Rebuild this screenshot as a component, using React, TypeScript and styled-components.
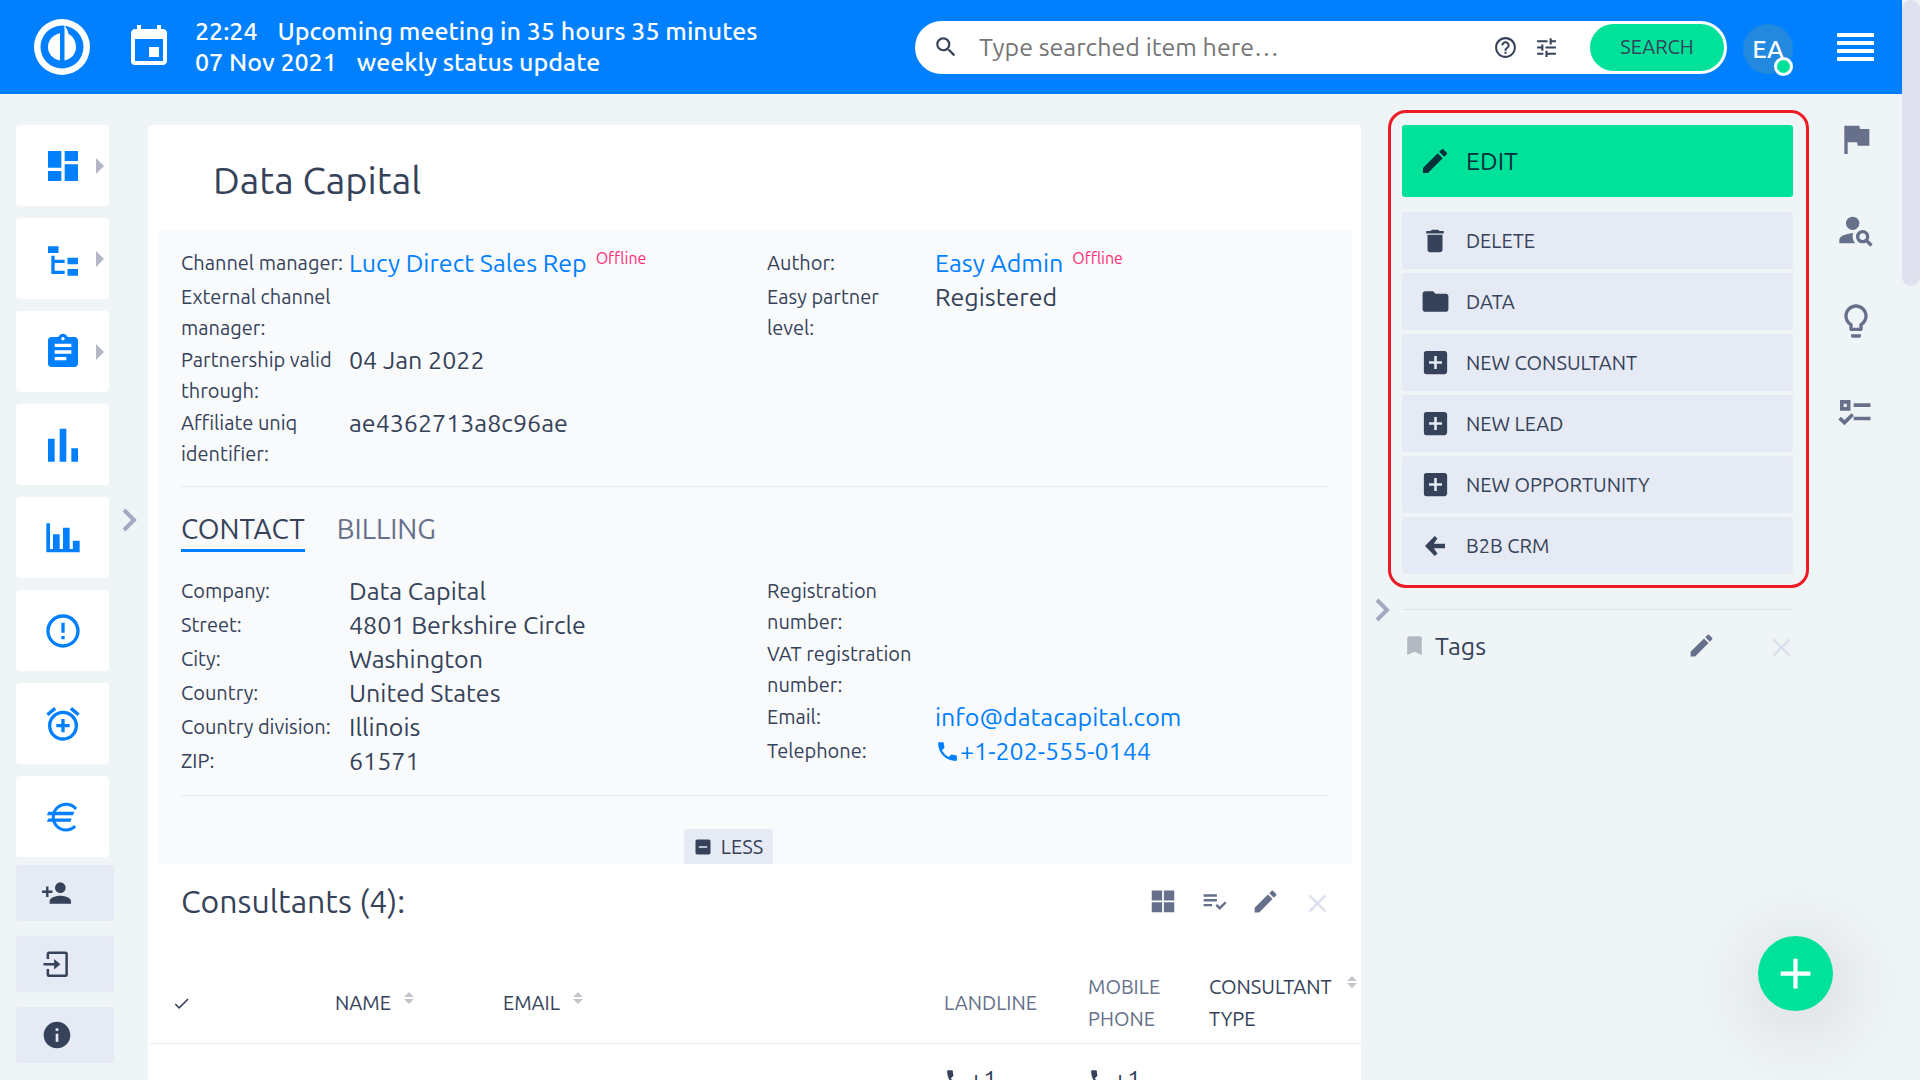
import React from "react";
import styled, { createGlobalStyle, css } from "styled-components";
import {
  MdAdd,
  MdAddAlarm,
  MdAddBox,
  MdAssignment,
  MdBookmark,
  MdCheck,
  MdClose,
  MdDashboard,
  MdDelete,
  MdEdit,
  MdErrorOutline,
  MdEvent,
  MdFlag,
  MdFolder,
  MdHelpOutline,
  MdIndeterminateCheckBox,
  MdInfo,
  MdLightbulbOutline,
  MdPersonSearch,
  MdPhone,
  MdPlaylistAddCheck,
  MdSearch,
  MdTune,
} from "react-icons/md";

const color = {
  text: "#354259",
  muted: "#66708a",
  faint: "#a4a8c0",
  link: "#0080ff",
  page: "#eff4f7",
  panel: "#f9fafc",
  soft: "#e6eaf4",
  line: "#e6e9f2",
  green: "#00e29a",
  pink: "#ff2d78",
};

const GlobalStyle = createGlobalStyle`
  *, *::before, *::after { box-sizing: border-box; }
  body {
    margin: 0;
    overflow: hidden;
    background: ${color.page};
    color: ${color.text};
    font-family: Ubuntu, "Noto Sans", "Open Sans", sans-serif;
    font-size: 25px;
    line-height: 34px;
  }
  button, input { font: inherit; color: inherit; }
  button { border: 0; padding: 0; background: none; cursor: pointer; }
  a { color: ${color.link}; text-decoration: none; }
  svg { display: block; flex: none; }
`;

const Shell = styled.div`
  display: grid;
  grid-template-columns: minmax(0, 1fr) 18px;
  height: 100vh;
`;

const Page = styled.div`
  display: flex;
  flex-direction: column;
  min-width: 0;
  height: 100vh;
  overflow: hidden;
`;

const ScrollTrack = styled.div`
  background: ${color.page};
`;

const ScrollThumb = styled.div`
  height: 286px;
  border-radius: 9px;
  background: #dfe1ef;
`;

const Header = styled.header`
  display: flex;
  align-items: center;
  flex: none;
  height: 94px;
  padding: 0 28px 0 34px;
  background: ${color.link};
  color: #fff;
`;

const EventLink = styled.a`
  display: flex;
  align-items: center;
  gap: 22px;
  margin-left: 35px;
  color: #fff;
  font-weight: 500;
  line-height: 31px;
`;

const EventLine = styled.span`
  display: flex;
  gap: 20px;
`;

const SearchBox = styled.form`
  display: flex;
  align-items: center;
  width: 812px;
  margin-left: auto;
  padding: 3px 3px 3px 18px;
  border-radius: 27px;
  background: #fff;
  color: ${color.text};
`;

const SearchInput = styled.input`
  flex: 1;
  min-width: 0;
  margin-left: 20px;
  padding: 0;
  border: 0;
  outline: 0;
  background: none;
  &::placeholder {
    color: #757575;
    opacity: 1;
  }
`;

const SearchTools = styled.div`
  display: flex;
  gap: 16px;
  margin-right: 31px;
`;

const SearchButton = styled.button`
  width: 134px;
  height: 47px;
  border-radius: 24px;
  background: ${color.green};
  font-size: 20px;
`;

const Avatar = styled.button`
  position: relative;
  width: 50px;
  height: 50px;
  margin: 4px 44px 0 16px;
  border-radius: 50%;
  background: #2389df;
  color: #fff;
  font-weight: 500;
`;

const Presence = styled.span`
  position: absolute;
  right: 0;
  bottom: -2px;
  width: 19px;
  height: 19px;
  border: 3px solid #fff;
  border-radius: 50%;
  background: ${color.green};
`;

const Body = styled.div`
  display: grid;
  grid-template-columns: 148px minmax(0, 1fr) 450px 91px;
  flex: 1;
  min-height: 0;
  padding-top: 31px;
`;

const LeftNav = styled.nav`
  position: relative;
  padding-left: 16px;
`;

const Tiles = styled.div`
  display: flex;
  flex-direction: column;
  align-items: flex-start;
  gap: 12px;
`;

const Tile = styled.a`
  position: relative;
  display: grid;
  place-items: center;
  width: 93px;
  height: 81px;
  border-radius: 4px;
  background: #fff;
`;

const TileArrow = styled.span`
  position: absolute;
  right: 5px;
  border: solid transparent;
  border-width: 8px 0 8px 8px;
  border-left-color: #b3b6c6;
`;

const NavFooter = styled.div`
  display: flex;
  flex-direction: column;
  gap: 15px;
  margin-top: 8px;
`;

const FooterButton = styled.button`
  display: flex;
  align-items: center;
  width: 98px;
  height: 56px;
  padding-left: 25px;
  border-radius: 3px;
  background: ${color.soft};
`;

const Collapse = styled.button<{ $top: number; $side: "left" | "right" }>`
  position: absolute;
  top: ${(p) => p.$top}px;
  ${(p) => (p.$side === "left" ? css`left: 14px;` : css`right: 10px;`)}
  color: ${color.faint};
`;

const Card = styled.main`
  border-radius: 4px 4px 0 0;
  background: #fff;
`;

const Title = styled.h1`
  margin: 0;
  padding: 28px 65px 24px;
  font-weight: 400;
  font-size: 38px;
  line-height: 54px;
`;

const Panel = styled.section`
  margin: 0 9px 0 10px;
  padding: 15px 23px 0;
  background: ${color.panel};
`;

const Columns = styled.div`
  display: grid;
  grid-template-columns: 1fr 1fr;
  margin-right: -24px;
`;

const Fields = styled.dl`
  margin: 0;
`;

const Field = styled.div`
  display: grid;
  grid-template-columns: 168px 1fr;
`;

const Label = styled.dt`
  padding-top: 1px;
  font-size: 20px;
  line-height: 31px;
  white-space: pre-line;
`;

const Value = styled.dd`
  display: flex;
  align-items: center;
  margin: 0;
  height: 34px;
  white-space: nowrap;
`;

const PhoneLink = styled.a`
  display: flex;
  align-items: center;
`;

const Status = styled.span`
  margin: 0 0 11px 9px;
  color: ${color.pink};
  font-size: 16px;
  line-height: 20px;
`;

const Rule = styled.hr`
  height: 1px;
  margin: 17px 0 0;
  border: 0;
  background: ${color.line};
`;

const Tabs = styled.div`
  display: flex;
  gap: 32px;
  margin: 25px 0 22px;
`;

const Tab = styled.button<{ $active?: boolean }>`
  padding-bottom: 3px;
  border-bottom: 3px solid ${(p) => (p.$active ? color.link : "transparent")};
  color: ${(p) => (p.$active ? color.text : color.muted)};
  font-size: 28px;
  line-height: 34px;
`;

const LessRow = styled.div`
  display: flex;
  justify-content: center;
  padding: 33px 53px 0 0;
`;

const LessButton = styled.button`
  display: flex;
  align-items: center;
  gap: 8px;
  height: 35px;
  padding: 0 10px 0 9px;
  border-radius: 3px 3px 0 0;
  background: ${color.soft};
  font-size: 20px;
`;

const SectionHead = styled.div`
  display: flex;
  align-items: center;
  justify-content: space-between;
  padding: 17px 28px 42px 33px;
`;

const SectionTitle = styled.h2`
  margin: 0;
  font-weight: 400;
  font-size: 32px;
  line-height: 40px;
`;

const Tools = styled.div`
  display: flex;
  align-items: center;
  gap: 22px;
  color: ${color.muted};
`;

const CloseButton = styled.button`
  padding-top: 4px;
  color: #dce0ee;
`;

const Table = styled.table`
  width: 100%;
  padding-left: 2px;
  border-spacing: 0;
  table-layout: fixed;
`;

const Th = styled.th<{ $muted?: boolean; $width?: number }>`
  width: ${(p) => (p.$width ? `${p.$width}px` : "auto")};
  padding: 8px 4px 8px 8px;
  border-bottom: 1px solid ${color.line};
  color: ${(p) => (p.$muted ? color.muted : color.text)};
  font-weight: 400;
  font-size: 20px;
  line-height: 32px;
  text-align: left;
`;

const SortButton = styled.button`
  display: flex;
  align-items: flex-start;
  gap: 13px;
  text-align: left;
`;

const SortIcon = styled.svg`
  margin-top: 5px;
`;

const CheckHead = styled.button`
  display: block;
  margin-left: 14px;
`;

const Td = styled.td`
  padding: 18px 0 0 8px;
`;

const PhoneCell = styled.span`
  display: flex;
  align-items: center;
`;

const Sidebar = styled.aside`
  position: relative;
  padding: 0 2px 0 27px;
`;

const ActionFrame = styled.div`
  display: flex;
  flex-direction: column;
  gap: 4px;
  margin-top: -15px;
  padding: 12px 13px 11px 11px;
  border: 3px solid #ed1c24;
  border-radius: 18px;
`;

const Action = styled.button<{ $primary?: boolean }>`
  display: flex;
  align-items: center;
  gap: 15px;
  height: 57px;
  padding-left: 17px;
  border-radius: 3px;
  background: ${color.soft};
  font-size: 20px;
  ${(p) =>
    p.$primary &&
    css`
      height: 72px;
      margin-bottom: 11px;
      background: ${color.green};
      color: #06303a;
      font-size: 25px;
    `}
`;

const ActionIcon = styled.span`
  display: grid;
  place-items: center;
  width: 32px;
`;

const Tags = styled.section`
  display: flex;
  align-items: center;
  margin: 21px 16px 0 14px;
  padding: 18px 0 0;
  border-top: 1px solid #dfe2ef;
`;

const TagsTitle = styled.h2`
  flex: 1;
  margin: 0 0 0 8px;
  font-weight: 400;
  font-size: 25px;
  line-height: 34px;
`;

const TagTools = styled.div`
  display: flex;
  align-items: center;
  gap: 50px;
  margin-right: -4px;
  color: ${color.muted};
`;

const BookmarkMark = styled.span`
  color: #b3b8c2;
`;

const Rail = styled.nav`
  display: flex;
  flex-direction: column;
  align-items: center;
  gap: 51px;
  margin-top: -6px;
  padding-right: 2px;
  color: ${color.muted};
`;

const Fab = styled.button`
  position: fixed;
  right: 87px;
  bottom: 69px;
  display: grid;
  place-items: center;
  width: 75px;
  height: 75px;
  border-radius: 50%;
  background: ${color.green};
  color: #fff;
  box-shadow: 4px 12px 70px 16px rgba(60, 40, 40, 0.1);
`;

const Logo = () => (
  <svg width="56" height="56" viewBox="0 0 56 56" fill="#fff" aria-label="Home" role="img">
    <path
      fillRule="evenodd"
      d="M28 0a28 28 0 1 1 0 56a28 28 0 1 1 0-56zM28 6.5a21.5 21.5 0 1 0 0 43a21.5 21.5 0 1 0 0-43z"
    />
    <path d="M26 14.2v27.4C18.5 40 14 34.6 14 28S18.5 16 26 14.2z" />
    <path d="M30.5 5c1 3.8 3.5 6 4 10C39.5 17.5 42 22.5 42 28c0 6.6-4.5 12-11.5 13.6z" />
  </svg>
);

const MenuIcon = () => (
  <svg width="37" height="28" viewBox="0 0 37 28" fill="#fff">
    <path d="M0 0h37v4H0zM0 8h37v4H0zM0 16h37v4H0zM0 24h37v4H0z" />
  </svg>
);

const TreeIcon = () => (
  <svg width="40" height="40" viewBox="0 0 24 24" fill="currentColor">
    <path d="M3 4.4h6.300v4H3zM5 10h2v2.400h6v2H7V19h6v2H5zM14.700 11.200H21v4h-6.300zM14.700 18H21v4h-6.300z" />
  </svg>
);

const BarsIcon = () => (
  <svg width="40" height="40" viewBox="0 0 24 24" fill="currentColor">
    <path d="M3 8.200h4V22H3zM10 2.200h4V22h-4zM17 14h4v8h-4z" />
  </svg>
);

const ReportIcon = () => (
  <svg width="40" height="40" viewBox="0 0 24 24" fill="currentColor">
    <path d="M2 3.200h2.200v15.400H6V9.800h4v8.800h2V5.800h4v12.800h1.900v-5H22v6.900H2z" />
  </svg>
);

const EuroIcon = () => (
  <svg width="40" height="40" viewBox="0 0 24 24" fill="none" stroke="currentColor" strokeWidth="1.8">
    <path d="M19.800 7.200A7.700 7.700 0 1 0 19.300 17.500" />
    <path d="M3.200 8.800h15.600l-.8 2.200H2.300zM3.200 12.900h14l-.8 2H2.300z" fill="currentColor" stroke="none" />
  </svg>
);

const AddPersonIcon = () => (
  <svg width="32" height="32" viewBox="0 0 24 24" fill="currentColor">
    <path d="M14.500 12a4 4 0 1 0 0-8a4 4 0 0 0 0 8zM5.600 10.200V7.200H3.800v3H.8v1.800h3v3h1.800v-3h3v-1.800zM14.500 14c-2.700 0-8 1.300-8 4v2h16v-2c0-2.700-5.300-4-8-4z" />
  </svg>
);

const EnterIcon = () => (
  <svg width="30" height="30" viewBox="0 0 24 24" fill="currentColor">
    <path d="M19.500 2h-13A2 2 0 0 0 4.500 4v4h2V4h13v16.300h-13v-4.300h-2v4.300a2 2 0 0 0 2 2h13a2 2 0 0 0 2-2V4a2 2 0 0 0-2-2zM10.500 16.300l5-4.200-5-4.200v3.200H2v2h8.500z" />
  </svg>
);

const GridIcon = () => (
  <svg width="30" height="30" viewBox="0 0 24 24" fill="currentColor">
    <path d="M3 3.500h8.300v8H3zM12.700 3.500H21v8h-8.300zM3 13h8.300v8H3zM12.700 13H21v8h-8.300z" />
  </svg>
);

const BackIcon = () => (
  <svg width="20" height="20" viewBox="0 0 20 20" fill="currentColor">
    <path d="M9.800 0L0 10l9.800 10 2.600-2.600-3.600-5.200H20V7.800H8.800l3.600-5.200z" />
  </svg>
);

const ChecklistIcon = () => (
  <svg width="40" height="40" viewBox="0 0 24 24" fill="none" stroke="currentColor" strokeWidth="2.2">
    <path d="M3.500 5.900h4.100v4.200H3.500zM10.600 7.900h10.100M10.600 15.900h10.100M2.200 15.700l2.900 2.700 4.900-4.900" />
  </svg>
);

const Chevron = () => (
  <svg width="16" height="24" viewBox="0 0 16 24" fill="none" stroke="currentColor" strokeWidth="4">
    <path d="M2 2l10 10L2 22" />
  </svg>
);

const Sort = () => (
  <SortIcon width="10" height="12" viewBox="0 0 10 12" fill="#c3c5cd">
    <path d="M5 0l5 5H0zM5 12L0 7h10z" />
  </SortIcon>
);

const tiles = [
  { name: "Dashboard", icon: <MdDashboard size={40} />, more: true },
  { name: "Projects", icon: <TreeIcon />, more: true },
  { name: "Tasks", icon: <MdAssignment size={40} />, more: true },
  { name: "Statistics", icon: <BarsIcon /> },
  { name: "Reports", icon: <ReportIcon /> },
  { name: "Alerts", icon: <MdErrorOutline size={40} /> },
  { name: "Attendance", icon: <MdAddAlarm size={40} /> },
  { name: "Budgets", icon: <EuroIcon /> },
];

const footer = [
  { name: "Invite user", icon: <AddPersonIcon /> },
  { name: "Sign in", icon: <EnterIcon /> },
  { name: "About", icon: <MdInfo size={32} /> },
];

const actions = [
  { name: "DELETE", icon: <MdDelete size={30} /> },
  { name: "DATA", icon: <MdFolder size={31} /> },
  { name: "NEW CONSULTANT", icon: <MdAddBox size={31} /> },
  { name: "NEW LEAD", icon: <MdAddBox size={31} /> },
  { name: "NEW OPPORTUNITY", icon: <MdAddBox size={31} /> },
  { name: "B2B CRM", icon: <BackIcon /> },
];

const rail = [
  { name: "Flags", icon: <MdFlag size={40} /> },
  { name: "Find person", icon: <MdPersonSearch size={40} /> },
  { name: "Tips", icon: <MdLightbulbOutline size={40} /> },
  { name: "To-do list", icon: <ChecklistIcon /> },
];

type FieldItem = { label: string; value?: React.ReactNode };

const FieldList = ({ items }: { items: FieldItem[] }) => (
  <Fields>
    {items.map((f) => (
      <Field key={f.label}>
        <Label>{f.label}</Label>
        <Value>{f.value}</Value>
      </Field>
    ))}
  </Fields>
);

const User = ({ name }: { name: string }) => (
  <>
    <a href="#user">{name}</a>
    <Status>Offline</Status>
  </>
);

export default function App() {
  return (
    <>
      <GlobalStyle />
      <Shell>
        <Page>
          <Header>
            <a href="#home">
              <Logo />
            </a>
            <EventLink href="#meeting">
              <MdEvent size={48} />
              <span>
                <EventLine>
                  <span>22:24</span>
                  <span>Upcoming meeting in 35 hours 35 minutes</span>
                </EventLine>
                <EventLine>
                  <span>07 Nov 2021</span>
                  <span>weekly status update</span>
                </EventLine>
              </span>
            </EventLink>
            <SearchBox onSubmit={(e) => e.preventDefault()}>
              <MdSearch size={26} />
              <SearchInput type="search" aria-label="Search" placeholder="Type searched item here…" />
              <SearchTools>
                <button type="button" aria-label="Help">
                  <MdHelpOutline size={25} />
                </button>
                <button type="button" aria-label="Filters">
                  <MdTune size={25} />
                </button>
              </SearchTools>
              <SearchButton type="submit">SEARCH</SearchButton>
            </SearchBox>
            <Avatar>
              EA
              <Presence />
            </Avatar>
            <button aria-label="Menu">
              <MenuIcon />
            </button>
          </Header>
          <Body>
            <LeftNav>
              <Tiles>
                {tiles.map((t) => (
                  <Tile key={t.name} href="#nav" aria-label={t.name}>
                    {t.icon}
                    {t.more && <TileArrow />}
                  </Tile>
                ))}
              </Tiles>
              <NavFooter>
                {footer.map((f) => (
                  <FooterButton key={f.name} aria-label={f.name}>
                    {f.icon}
                  </FooterButton>
                ))}
              </NavFooter>
              <Collapse $top={383} $side="right" aria-label="Expand menu">
                <Chevron />
              </Collapse>
            </LeftNav>
            <Card>
              <Title>Data Capital</Title>
              <Panel>
                <Columns>
                  <FieldList
                    items={[
                      { label: "Channel manager:", value: <User name="Lucy Direct Sales Rep" /> },
                      { label: "External channel\nmanager:" },
                      { label: "Partnership valid\nthrough:", value: "04 Jan 2022" },
                      { label: "Affiliate uniq\nidentifier:", value: "ae4362713a8c96ae" },
                    ]}
                  />
                  <FieldList
                    items={[
                      { label: "Author:", value: <User name="Easy Admin" /> },
                      { label: "Easy partner\nlevel:", value: "Registered" },
                    ]}
                  />
                </Columns>
                <Rule />
                <Tabs role="tablist">
                  <Tab role="tab" aria-selected="true" $active>
                    CONTACT
                  </Tab>
                  <Tab role="tab" aria-selected="false">
                    BILLING
                  </Tab>
                </Tabs>
                <Columns>
                  <FieldList
                    items={[
                      { label: "Company:", value: "Data Capital" },
                      { label: "Street:", value: "4801 Berkshire Circle" },
                      { label: "City:", value: "Washington" },
                      { label: "Country:", value: "United States" },
                      { label: "Country division:", value: "Illinois" },
                      { label: "ZIP:", value: "61571" },
                    ]}
                  />
                  <FieldList
                    items={[
                      { label: "Registration\nnumber:" },
                      { label: "VAT registration\nnumber:" },
                      { label: "Email:", value: <a href="mailto:info@datacapital.com">info@datacapital.com</a> },
                      {
                        label: "Telephone:",
                        value: (
                          <PhoneLink href="tel:+12025550144">
                            <MdPhone size={25} />
                            +1-202-555-0144
                          </PhoneLink>
                        ),
                      },
                    ]}
                  />
                </Columns>
                <Rule />
                <LessRow>
                  <LessButton>
                    <MdIndeterminateCheckBox size={20} />
                    LESS
                  </LessButton>
                </LessRow>
              </Panel>
              <SectionHead>
                <SectionTitle>Consultants (4):</SectionTitle>
                <Tools>
                  <button aria-label="Tile view">
                    <GridIcon />
                  </button>
                  <button aria-label="Select">
                    <MdPlaylistAddCheck size={29} />
                  </button>
                  <button aria-label="Edit">
                    <MdEdit size={29} />
                  </button>
                  <CloseButton aria-label="Close">
                    <MdClose size={31} />
                  </CloseButton>
                </Tools>
              </SectionHead>
              <Table>
                <thead>
                  <tr>
                    <Th $width={177}>
                      <CheckHead aria-label="Select all">
                        <MdCheck size={19} />
                      </CheckHead>
                    </Th>
                    <Th $width={168}>
                      <SortButton>
                        NAME
                        <Sort />
                      </SortButton>
                    </Th>
                    <Th>
                      <SortButton>
                        EMAIL
                        <Sort />
                      </SortButton>
                    </Th>
                    <Th $width={144} $muted>
                      LANDLINE
                    </Th>
                    <Th $width={121} $muted>
                      MOBILE PHONE
                    </Th>
                    <Th $width={160}>
                      <SortButton>
                        CONSULTANT TYPE
                        <Sort />
                      </SortButton>
                    </Th>
                  </tr>
                </thead>
                <tbody>
                  <tr>
                    <Td />
                    <Td />
                    <Td />
                    <Td>
                      <PhoneCell>
                        <MdPhone size={25} />
                        +1
                      </PhoneCell>
                    </Td>
                    <Td>
                      <PhoneCell>
                        <MdPhone size={25} />
                        +1
                      </PhoneCell>
                    </Td>
                    <Td />
                  </tr>
                </tbody>
              </Table>
            </Card>
            <Sidebar>
              <ActionFrame>
                <Action $primary>
                  <ActionIcon>
                    <MdEdit size={32} />
                  </ActionIcon>
                  EDIT
                </Action>
                {actions.map((a) => (
                  <Action key={a.name}>
                    <ActionIcon>{a.icon}</ActionIcon>
                    {a.name}
                  </Action>
                ))}
              </ActionFrame>
              <Collapse $top={473} $side="left" aria-label="Collapse sidebar">
                <Chevron />
              </Collapse>
              <Tags>
                <BookmarkMark>
                  <MdBookmark size={25} />
                </BookmarkMark>
                <TagsTitle>Tags</TagsTitle>
                <TagTools>
                  <button aria-label="Edit tags">
                    <MdEdit size={29} />
                  </button>
                  <CloseButton aria-label="Close tags">
                    <MdClose size={31} />
                  </CloseButton>
                </TagTools>
              </Tags>
            </Sidebar>
            <Rail>
              {rail.map((r) => (
                <button key={r.name} aria-label={r.name}>
                  {r.icon}
                </button>
              ))}
            </Rail>
          </Body>
        </Page>
        <ScrollTrack>
          <ScrollThumb />
        </ScrollTrack>
      </Shell>
      <Fab aria-label="Add">
        <MdAdd size={51} />
      </Fab>
    </>
  );
}
